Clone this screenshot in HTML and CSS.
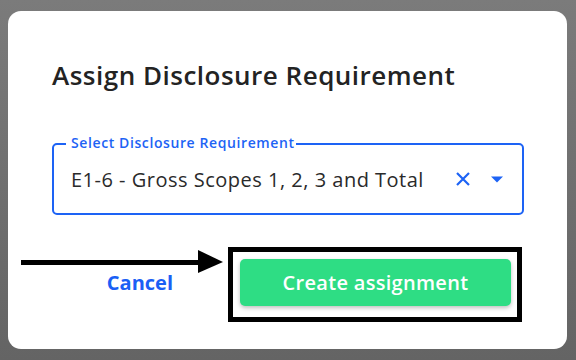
FILE: index.html
```html
<!DOCTYPE html>
<html lang="en">
<head>
  <meta charset="UTF-8" />
  <meta name="viewport" content="width=device-width, initial-scale=1.0"/>
  <title>Assign Disclosure Requirement</title>
  <link rel="stylesheet" href="styles.css">
</head>
<body>
  <div class="dialog">
    <h2 class="dialog-title">Assign Disclosure Requirement</h2>

    <div class="field">
      <span class="field-label">Select Disclosure Requirement</span>
      <span class="field-value">E1-6 - Gross Scopes 1, 2, 3 and Total</span>
      <span class="field-clear">
        <svg width="16" height="14" viewBox="0 0 16 14">
          <path d="M2 1 L14 13 M14 1 L2 13" stroke="#1d63f5" stroke-width="2.2" fill="none"/>
        </svg>
      </span>
      <span class="field-caret">
        <svg width="14" height="7" viewBox="0 0 14 7">
          <polygon points="1,0.5 13,0.5 7,6.5" fill="#1d63f5"/>
        </svg>
      </span>
    </div>

    <div class="actions">
      <button class="btn-cancel">Cancel</button>
      <div class="btn-wrap">
        <button class="btn-create">Create assignment</button>
        <div class="highlight"></div>
      </div>
    </div>

    <svg class="pointer" width="204" height="24" viewBox="0 0 204 24">
      <rect x="0" y="10" width="182" height="5" fill="#000"/>
      <polygon points="177,0 202,12 177,23" fill="#000"/>
    </svg>
  </div>
</body>
</html>
```

FILE: styles.css
```css
* {
  box-sizing: border-box;
}
body {
  margin: 0;
  height: 360px;
  padding: 11px 9px 11px 8px;
  background: linear-gradient(to bottom, #7b7b7b, #646464);
  font-family: "Open Sans", Lato, sans-serif;
  overflow: hidden;
}
.dialog {
  position: relative;
  background: #fff;
  border-radius: 13px;
  height: 338px;
  padding: 48px 43px 0 44px;
}
.dialog-title {
  margin: 0;
  font-size: 26px;
  line-height: 32px;
  font-weight: 600;
  letter-spacing: 0.5px;
  color: #232323;
}
.field {
  position: relative;
  margin-top: 52px;
  height: 72px;
  border: 2px solid #1d63f5;
  border-radius: 5px;
  display: flex;
  align-items: center;
  padding: 0 18px 0 17px;
}
.field-label {
  position: absolute;
  top: -10px;
  left: 12px;
  padding: 0 1px 0 5px;
  background: #fff;
  color: #1d63f5;
  font-size: 14px;
  font-weight: 600;
  letter-spacing: 0.6px;
  line-height: 16px;
}
.field-value {
  flex: 1;
  font-size: 20px;
  letter-spacing: 0.5px;
  color: #2a2a2a;
  padding-top: 1px;
}
.field-clear {
  display: flex;
  margin-right: 19px;
}
.field-caret {
  display: flex;
  margin-top: 1px;
}
.actions {
  display: flex;
  align-items: center;
  justify-content: flex-end;
  margin-top: 44px;
  padding-right: 13px;
}
.btn-cancel {
  border: none;
  background: none;
  padding: 0;
  margin-right: 67px;
  font-family: inherit;
  font-size: 20px;
  font-weight: 700;
  color: #1a5ff5;
}
.btn-wrap {
  position: relative;
}
.btn-create {
  display: block;
  width: 271px;
  height: 47px;
  border: none;
  border-radius: 5px;
  background: #2edd84;
  color: #fff;
  font-family: inherit;
  font-size: 20px;
  font-weight: 600;
  letter-spacing: 0.3px;
  box-shadow: 0 2px 4px rgba(0, 0, 0, 0.25);
}
.highlight {
  position: absolute;
  top: -12px;
  left: -12px;
  right: -11px;
  bottom: -16px;
  border: 5px solid #000;
}
.pointer {
  position: absolute;
  left: 13px;
  top: 239px;
}
```
